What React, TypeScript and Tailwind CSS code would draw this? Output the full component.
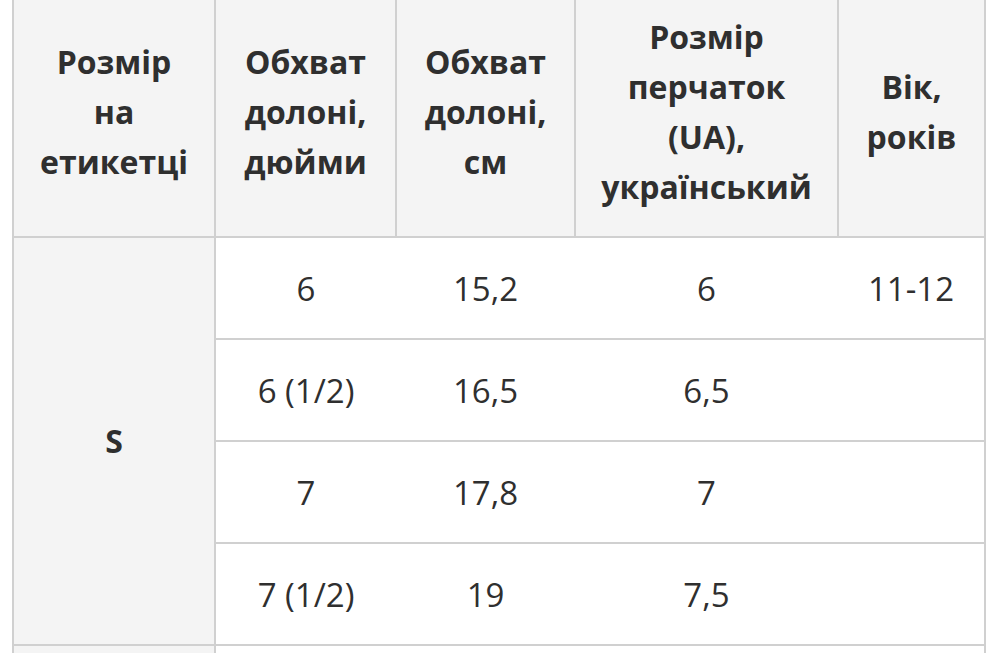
import React from "react";

const rows = [
  { a: "6", b: "15,2", c: "6", d: "11-12" },
  { a: "6 (1/2)", b: "16,5", c: "6,5", d: "" },
  { a: "7", b: "17,8", c: "7", d: "" },
  { a: "7 (1/2)", b: "19", c: "7,5", d: "" },
];

export default function App() {
  const th =
    "bg-[#f4f4f4] border-2 border-[#d0d0d0] px-3 py-[24px] text-center align-middle font-bold text-[32px] leading-[50px] text-[#2f2f2f]";
  const td =
    "border-y-2 border-[#d0d0d0] px-3 pt-[26px] pb-[24px] text-center align-middle font-normal text-[33px] leading-[50px] text-[#2f2f2f]";
  return (
    <div
      className="w-[994px] h-[653px] overflow-hidden bg-white"
      style={{ fontFamily: '"Open Sans", "Noto Sans", sans-serif' }}
    >
      <table className="ml-[12px] mt-[-14px] table-fixed border-collapse w-[972px]">
        <colgroup>
          <col className="w-[202px]" />
          <col className="w-[181px]" />
          <col className="w-[179px]" />
          <col className="w-[263px]" />
          <col className="w-[147px]" />
        </colgroup>
        <thead>
          <tr>
            <th className={th}>
              Розмір
              <br />
              на
              <br />
              етикетці
            </th>
            <th className={th}>
              Обхват
              <br />
              долоні,
              <br />
              дюйми
            </th>
            <th className={th}>
              Обхват
              <br />
              долоні,
              <br />
              см
            </th>
            <th className={th}>
              Розмір
              <br />
              перчаток
              <br />
              (UA),
              <br />
              український
            </th>
            <th className={th}>
              Вік,
              <br />
              років
            </th>
          </tr>
        </thead>
        <tbody>
          {rows.map((r, i) => (
            <tr key={i}>
              {i === 0 && (
                <td
                  rowSpan={4}
                  className="bg-[#f4f4f4] border-2 border-[#d0d0d0] text-center align-middle font-bold text-[32px] text-[#2f2f2f]"
                >
                  S
                </td>
              )}
              <td className={td}>{r.a}</td>
              <td className={td}>{r.b}</td>
              <td className={td}>{r.c}</td>
              <td className={td + " border-r-2"}>{r.d}</td>
            </tr>
          ))}
          <tr>
            <td className="bg-[#f4f4f4] border-2 border-[#d0d0d0] h-[100px]"></td>
            <td className={td}></td>
            <td className={td}></td>
            <td className={td}></td>
            <td className={td + " border-r-2"}></td>
          </tr>
        </tbody>
      </table>
    </div>
  );
}
